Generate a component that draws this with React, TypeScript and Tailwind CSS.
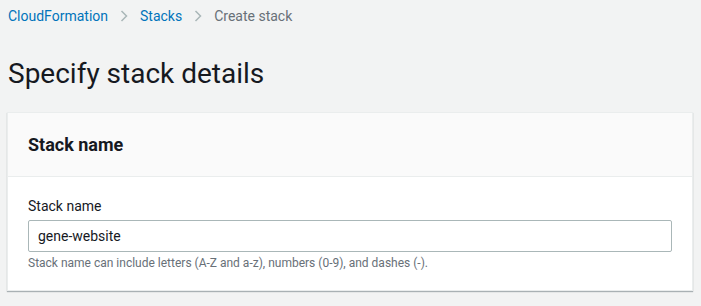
function Chevron() {
  return (
    <svg width="10" height="12" viewBox="0 0 10 12" fill="none" stroke="#aab7b8" strokeWidth="1.5" className="mx-[11px]">
      <polyline points="2.5 1 7.5 6 2.5 11" />
    </svg>
  )
}

export default function App() {
  return (
    <div className="min-h-screen bg-[#f2f3f3] px-[8px] pt-[6px] font-['Roboto',sans-serif] text-[#16191f]">
      <nav className="flex items-center h-[20px] text-[14px]">
        <span className="text-[#0073bb]">CloudFormation</span>
        <Chevron />
        <span className="text-[#0073bb]">Stacks</span>
        <Chevron />
        <span className="text-[#687078]">Create stack</span>
      </nav>

      <h1 className="mt-[30px] text-[28px] leading-[36px] font-normal">Specify stack details</h1>

      <div className="mt-[20px] ml-[-1px] bg-white border border-[#eaeded] shadow-[0_1px_1px_0_rgba(0,28,36,0.3)]">
        <div className="h-[64px] flex items-center px-[20px] bg-[#fafafa] border-b border-[#eaeded]">
          <h2 className="text-[18px] font-bold">Stack name</h2>
        </div>
        <div className="px-[20px] pt-[18px] pb-[19px]">
          <div className="text-[14px] leading-[22px]">Stack name</div>
          <input
            readOnly
            value="gene-website"
            className="mt-[3px] block w-full h-[32px] px-[9px] text-[14px] border border-[#aab7b8] rounded-[2px] outline-none text-[#16191f]"
          />
          <div className="mt-[3px] text-[12px] leading-[16px] text-[#687078]">
            Stack name can include letters (A-Z and a-z), numbers (0-9), and dashes (-).
          </div>
        </div>
      </div>
    </div>
  )
}
